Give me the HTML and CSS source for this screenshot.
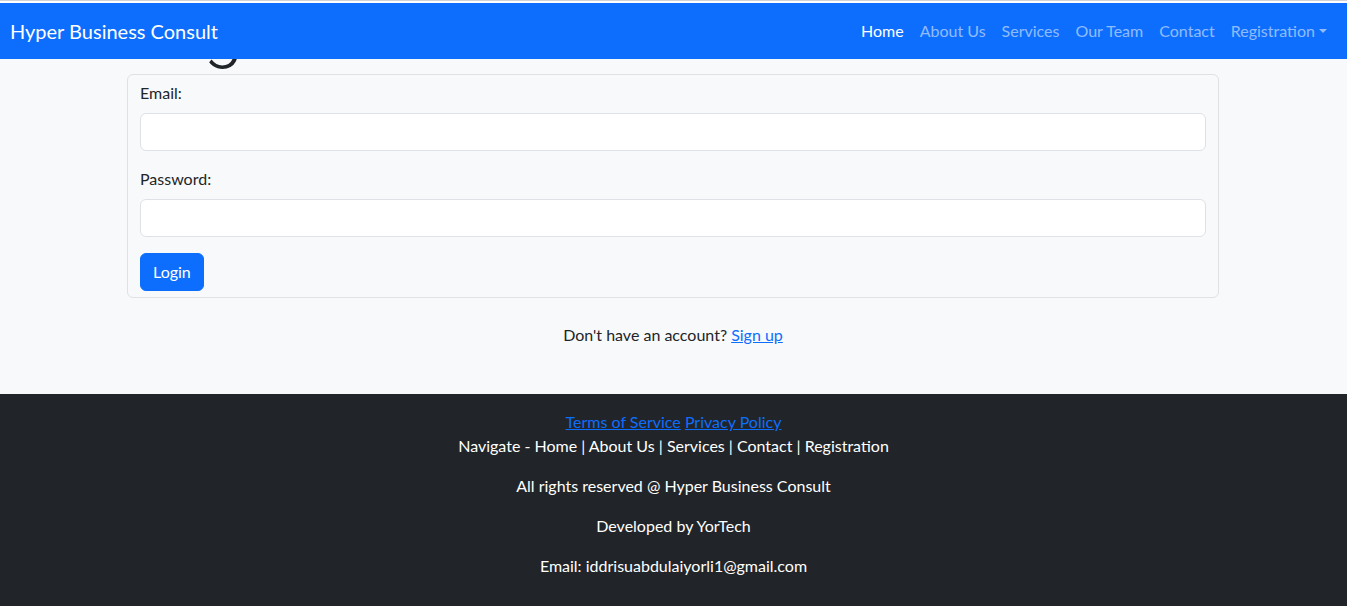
FILE: index.html
```html
<!DOCTYPE html>
<html lang="en">
<head>
<meta charset="utf-8">
<title>Login - Hyper Business Consult</title>
<link rel="stylesheet" href="styles.css">
</head>
<body>
<div class="page">
  <header class="topbar">
    <div class="chrome"></div>
    <nav class="navbar">
      <a class="brand" href="#">Hyper Business Consult</a>
      <ul class="nav">
        <li><a class="nav-link active" href="#">Home</a></li>
        <li><a class="nav-link" href="#">About Us</a></li>
        <li><a class="nav-link" href="#">Services</a></li>
        <li><a class="nav-link" href="#">Our Team</a></li>
        <li><a class="nav-link" href="#">Contact</a></li>
        <li><a class="nav-link dropdown" href="#">Registration</a></li>
      </ul>
    </nav>
  </header>

  <main class="main">
    <div class="container">
      <h1 class="title">Login</h1>
      <form class="card">
        <div class="field">
          <label class="label" for="email">Email:</label>
          <input class="input" id="email" type="email">
        </div>
        <div class="field">
          <label class="label" for="password">Password:</label>
          <input class="input" id="password" type="password">
        </div>
        <button class="btn" type="button">Login</button>
      </form>
      <p class="signup">Don't have an account? <a href="#">Sign up</a></p>
    </div>
  </main>

  <footer class="footer">
    <p><a href="#">Terms of Service</a> <a href="#">Privacy Policy</a><br>
    Navigate - Home | About Us | Services | Contact | Registration</p>
    <p>All rights reserved @ Hyper Business Consult</p>
    <p>Developed by YorTech</p>
    <p>Email: iddrisuabdulaiyorli1@gmail.com</p>
  </footer>
</div>
</body>
</html>
```

FILE: styles.css
```css
html { background: #ffffff; }
body {
  margin: 0;
  font-family: "Lato", "Noto Sans", sans-serif;
  font-size: 16px;
  line-height: 24px;
  color: #212529;
}
.page { width: 1347px; }

.topbar {
  position: fixed;
  top: 0;
  left: 0;
  width: 1347px;
  z-index: 10;
}
.chrome {
  height: 2px;
  background: #ffffff;
  border-top: 1px solid #cfd2d6;
}
.navbar {
  height: 56px;
  background: #0d6efd;
  display: flex;
  align-items: center;
  justify-content: space-between;
  padding: 0 12px 0 10px;
}
.brand {
  color: #ffffff;
  font-size: 20px;
  line-height: 30px;
  text-decoration: none;
}
.nav {
  list-style: none;
  margin: 0;
  padding: 0;
  display: flex;
}
.nav-link {
  display: block;
  padding: 8px;
  color: rgba(255, 255, 255, 0.55);
  text-decoration: none;
}
.nav-link.active { color: #ffffff; }
.dropdown::after {
  content: "";
  display: inline-block;
  margin-left: 0.255em;
  vertical-align: 0.255em;
  border-top: 0.3em solid;
  border-right: 0.3em solid transparent;
  border-left: 0.3em solid transparent;
}

.main {
  background: #f8f9fa;
  padding: 1px 0 47px;
  overflow: hidden;
}
.container {
  width: 1092px;
  margin: 0 128px 0 127px;
}
.title {
  margin: -15px 0 2px;
  font-family: "Roboto", "Open Sans", sans-serif;
  font-size: 72px;
  font-weight: 300;
  line-height: 86px;
  letter-spacing: -1px;
}
.card {
  border: 1px solid #dfe1e4;
  border-radius: 6px;
  padding: 6px 12px;
  display: flex;
  flex-direction: column;
  align-items: flex-start;
}
.field {
  width: 100%;
  margin-bottom: 16px;
}
.label {
  display: block;
  margin-bottom: 8px;
}
.input {
  display: block;
  box-sizing: border-box;
  width: 100%;
  height: 38px;
  border: 1px solid #dee2e6;
  border-radius: 6px;
  background: #ffffff;
  font: inherit;
}
.btn {
  height: 38px;
  padding: 6px 12px;
  border: 1px solid #0d6efd;
  border-radius: 6px;
  background: #0d6efd;
  color: #ffffff;
  font: inherit;
}
.signup {
  margin: 25px 0 0;
  text-align: center;
}
a { color: #0d6efd; }

.footer {
  background: #212529;
  color: #ffffff;
  text-align: center;
  padding: 16px 0 12px;
}
.footer p { margin: 0 0 16px; }
```
